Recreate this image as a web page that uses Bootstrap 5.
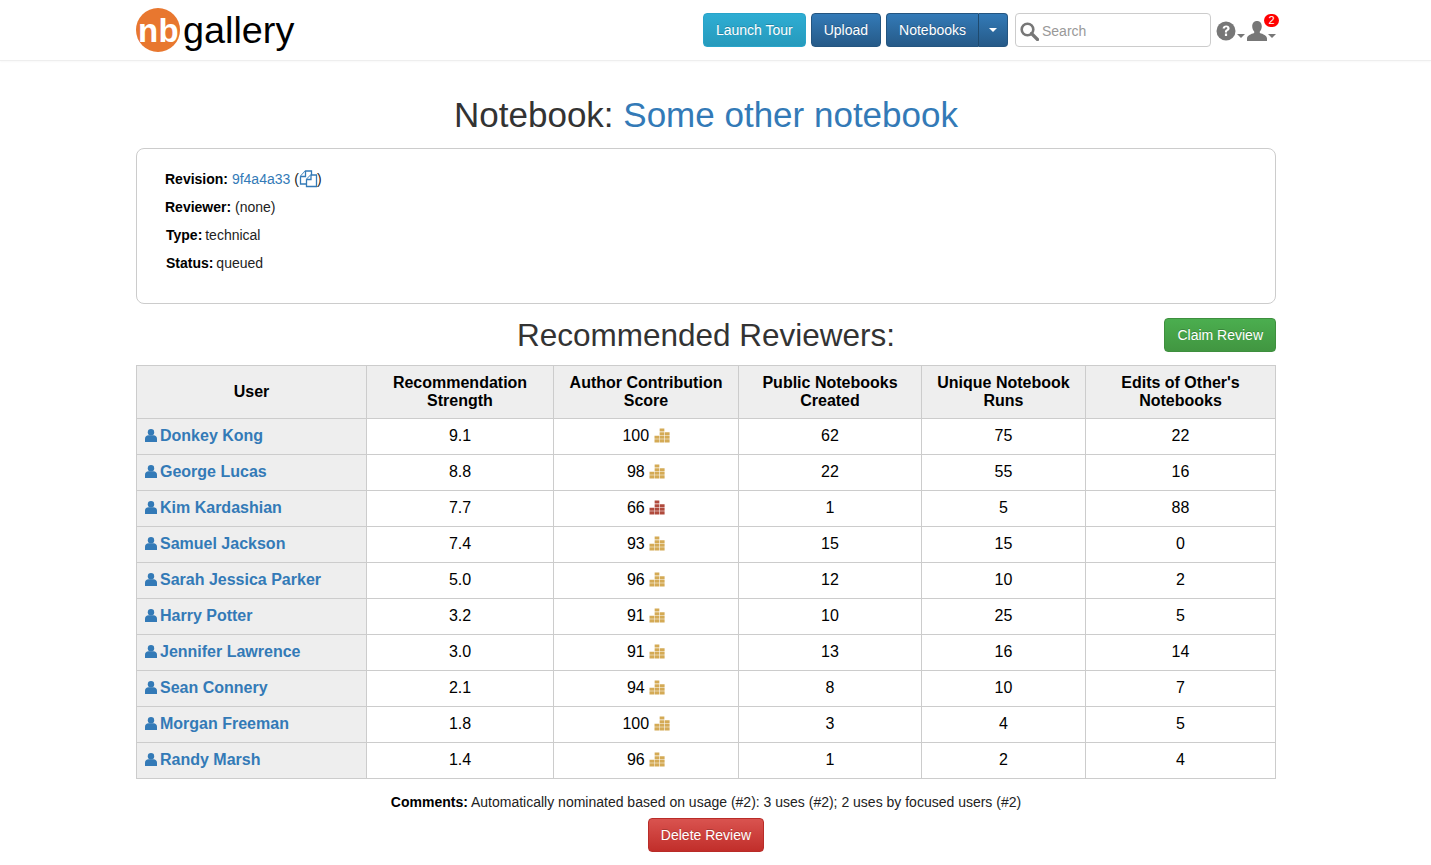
<!DOCTYPE html>
<html lang="en">
<head>
<meta charset="utf-8">
<title>nbgallery</title>
<link href="https://cdn.jsdelivr.net/npm/bootstrap@5.3.0/dist/css/bootstrap.min.css" rel="stylesheet">
<style>
body{font-family:"Liberation Sans",Arial,sans-serif;font-size:14px;line-height:20px;color:#000;background:#fff;overflow:hidden}
.wrap-w{width:1140px;margin-left:136px}
.top-bar{height:61px;border-bottom:1px solid #eee;box-shadow:0 1px 2px rgba(0,0,0,.03)}
.logo-w{height:60px;position:relative;width:170px}
.logo-c{position:absolute;left:0;top:8px;width:44px;height:44px;border-radius:50%;background:#e8772f}
.logo-nb{position:absolute;left:2px;top:9px;font-size:33px;font-weight:700;line-height:44px;color:#fff;width:50px;letter-spacing:.3px}
.logo-g{position:absolute;left:47px;top:8px;font-size:37.800px;line-height:44px;color:#000}
.bt{font-size:14px;line-height:20px;padding:6px 12px;border-radius:4px;color:#fff;border:1px solid;text-shadow:0 -1px 0 rgba(0,0,0,.2);height:34px}
.bt:hover,.bt:active{color:#fff}
.bt-gap{margin-right:5px}
.bt-info{background:linear-gradient(#2eadd3,#269abc);border-color:#28a4c9}
.bt-pri{background:linear-gradient(#337ab7,#265a88);border-color:#245580}
.bt-suc{background:linear-gradient(#4bae4f,#419641);border-color:#3e8f3e}
.bt-dan{background:linear-gradient(#d9534f,#c12e2a);border-color:#b92c28}
.caret-w{width:0;height:0;border-left:4px solid transparent;border-right:4px solid transparent;border-top:4px solid currentColor;display:inline-block}
.split-l{border-radius:4px 0 0 4px;border-right:1px solid #1e4a6e;padding:6px 12px}
.split-r{border-radius:0 4px 4px 0;border-left:0;width:29px;padding:0;display:flex;align-items:center;justify-content:center}
.search-w{width:196px;height:34px;border:1px solid #ccc;border-radius:4px;padding:2px 4px 0;color:#999;margin-left:7px}
.search-in{border:0;outline:0;padding:0;width:160px;font-size:14px;color:#555;background:transparent;margin-left:3px}
.search-in::placeholder{color:#999;opacity:1}
.ic-gray{color:#777}
.ico-w{position:relative;height:34px;margin-left:5px;padding-top:2px}
.car-a{margin:10px 0 0 1px}
.car-b{margin:10px 0 0 0}
.usr-w{margin-left:1px}
.nt-badge{position:absolute;left:18px;top:-7px;width:15px;height:13px;border-radius:7px;background:#f00;color:#fff;font-size:11px;line-height:13px;text-align:center}
.pg-title{font-size:35px;line-height:40px;text-align:center;color:#333;margin:34px 0 13px;font-weight:400}
.pg-title a{color:#337ab7;text-decoration:none}
.info-box{border:1px solid #ccc;border-radius:8px;height:156px;padding:20px 28px}
.info-box p{margin:0 0 8px;line-height:20px;color:#222}
.info-box p.nudge{padding-left:1px}
.info-box p.nudge b{margin-right:-1px}
.info-box b{color:#000}
.info-box a{color:#337ab7;text-decoration:none}
.cp-ic{vertical-align:-4px;margin:0 -2px 0 -1px}
.rec-head{height:34px;margin-top:14px;margin-bottom:13px;position:relative}
.rec-title{font-size:31.500px;line-height:34px;color:#333;font-weight:400;text-align:center;margin:0;width:1140px}
.rec-btn{position:absolute;right:0;top:0}
.tb-w{width:1139px;border-collapse:collapse;table-layout:fixed;font-size:16px;color:#000}
.tb-w th,.tb-w td{border:1px solid #ccc;text-align:center;vertical-align:middle;padding:0}
.tb-w thead th{background:#eee;line-height:18px;height:53px;font-weight:700}
.tb-w tbody td{height:36px;line-height:20px;font-weight:400;padding-bottom:2px}
.tb-w .u-cell{background:#eee;text-align:left;padding-left:8px;font-weight:700}
.tb-w .u-cell a{color:#337ab7;text-decoration:none;font-weight:700}
.u-ic{color:#337ab7;vertical-align:-1px;margin-right:3px}
.bars{vertical-align:-2px}
.cmts{text-align:center;margin:13px 0 6px;line-height:20px;color:#222}
.cmts b{color:#000}
.del-w{text-align:center}
</style>
</head>
<body>
<svg width="0" height="0" class="d-none" aria-hidden="true">
  <symbol id="s-user" viewBox="0 0 12 13"><circle cx="6" cy="3.200" r="3.200" fill="currentColor"/><path fill="currentColor" d="M0 13v-3.500C0 7.600 1.600 6.300 3.500 6.300h5c1.900 0 3.500 1.300 3.500 3.200V13z"/></symbol>
  <symbol id="s-bars" viewBox="0 0 17 16"><path fill="currentColor" d="M6 .5h5v3.300H6zM6 4.400h5v3.200H6zM11.600 4.400h5v3.200h-5zM.5 8.200h5v3.200h-5zM6 8.200h5v3.200H6zM11.600 8.200h5v3.200h-5zM.5 12h5v3.500h-5zM6 12h5v3.500H6zM11.600 12h5v3.500h-5z"/></symbol>
</svg>
<header class="top-bar">
  <div class="wrap-w d-flex align-items-center justify-content-between">
    <div class="logo-w">
      <span class="logo-c"></span>
      <span class="logo-nb">nb</span>
      <span class="logo-g">gallery</span>
    </div>
    <div class="d-flex align-items-center">
      <a class="btn bt bt-info bt-gap" href="#">Launch Tour</a>
      <a class="btn bt bt-pri bt-gap" href="#">Upload</a>
      <div class="d-flex">
        <a class="btn bt bt-pri split-l" href="#">Notebooks</a>
        <a class="btn bt bt-pri split-r" href="#"><span class="caret-w"></span></a>
      </div>
      <div class="search-w d-flex align-items-center">
        <svg width="19" height="19" viewBox="0 0 19 19" fill="none" stroke="#777" stroke-width="2.600"><circle cx="7.500" cy="7.500" r="5.800"/><path d="M11.500 11.500l6 6" stroke-width="3.200" stroke-linecap="round"/></svg>
        <input class="search-in" type="text" placeholder="Search">
      </div>
      <div class="ico-w d-flex align-items-center ic-gray">
        <svg width="20" height="20" viewBox="0 0 20 20"><circle cx="10" cy="10" r="9.500" fill="#777"/><path d="M6.600 7.600c.2-2.200 1.600-3.200 3.600-3.200 2.100 0 3.400 1.100 3.400 2.800 0 1.400-.8 2-1.700 2.600-.7.500-.9.800-.9 1.600H8.900c0-1.500.4-2.100 1.400-2.800.7-.5 1-.8 1-1.300 0-.6-.4-1-1.100-1-.8 0-1.200.5-1.300 1.300zM8.900 12.600h2.200v2.300H8.900z" fill="#fff"/></svg>
        <span class="caret-w car-a"></span>
        <span class="usr-w position-relative d-inline-flex align-items-center">
          <svg width="22" height="20" viewBox="0 0 22 20" fill="#777"><path d="M11 0c3 0 4.800 2.200 4.800 5.300 0 2.100-.8 4-2 5.200v1.600c3.200 1 7.200 2.500 7.200 5.400V20H1v-2.500c0-2.900 4-4.400 7.200-5.400v-1.600C7 9.300 6.200 7.400 6.200 5.300 6.200 2.200 8 0 11 0z"/></svg>
          <span class="caret-w car-b"></span>
          <span class="nt-badge">2</span>
        </span>
      </div>
    </div>
  </div>
</header>
<main class="wrap-w">
  <h1 class="pg-title">Notebook: <a href="#">Some other notebook</a></h1>
  <section class="info-box">
    <p><b>Revision:</b> <a href="#">9f4a4a33</a> (<svg class="cp-ic" width="21" height="19" viewBox="0 0 21 19" fill="#fff" stroke="#337ab7" stroke-width="1.300" stroke-linejoin="miter"><path d="M2.500 7.500l5-5.500h6v13h-11z"/><path d="M7.500 2v5.500h-5"/><path d="M8.500 10.500l4.500-4.500h5.500v11.500h-10z"/><path d="M13 6v4.500H8.500"/></svg>)</p>
    <p><b>Reviewer:</b> (none)</p>
    <p class="nudge"><b>Type:</b> technical</p>
    <p class="nudge"><b>Status:</b> queued</p>
  </section>
  <div class="rec-head">
    <h2 class="rec-title">Recommended Reviewers:</h2>
    <a class="btn bt bt-suc rec-btn" href="#">Claim Review</a>
  </div>
  <table class="tb-w">
    <colgroup><col style="width:230px"><col style="width:187px"><col style="width:185px"><col style="width:183px"><col style="width:164px"><col style="width:190px"></colgroup>
    <thead><tr><th>User</th><th>Recommendation<br>Strength</th><th>Author Contribution<br>Score</th><th>Public Notebooks<br>Created</th><th>Unique Notebook<br>Runs</th><th>Edits of Other's<br>Notebooks</th></tr></thead>
    <tbody>
      <tr><td class="u-cell"><svg class="u-ic" width="12" height="13"><use href="#s-user"/></svg><a href="#">Donkey Kong</a></td><td>9.1</td><td>100 <svg class="bars" width="16" height="15" color="#d4aa55"><use href="#s-bars"/></svg></td><td>62</td><td>75</td><td>22</td></tr>
      <tr><td class="u-cell"><svg class="u-ic" width="12" height="13"><use href="#s-user"/></svg><a href="#">George Lucas</a></td><td>8.8</td><td>98 <svg class="bars" width="16" height="15" color="#d4aa55"><use href="#s-bars"/></svg></td><td>22</td><td>55</td><td>16</td></tr>
      <tr><td class="u-cell"><svg class="u-ic" width="12" height="13"><use href="#s-user"/></svg><a href="#">Kim Kardashian</a></td><td>7.7</td><td>66 <svg class="bars" width="16" height="15" color="#b04a3c"><use href="#s-bars"/></svg></td><td>1</td><td>5</td><td>88</td></tr>
      <tr><td class="u-cell"><svg class="u-ic" width="12" height="13"><use href="#s-user"/></svg><a href="#">Samuel Jackson</a></td><td>7.4</td><td>93 <svg class="bars" width="16" height="15" color="#d4aa55"><use href="#s-bars"/></svg></td><td>15</td><td>15</td><td>0</td></tr>
      <tr><td class="u-cell"><svg class="u-ic" width="12" height="13"><use href="#s-user"/></svg><a href="#">Sarah Jessica Parker</a></td><td>5.0</td><td>96 <svg class="bars" width="16" height="15" color="#d4aa55"><use href="#s-bars"/></svg></td><td>12</td><td>10</td><td>2</td></tr>
      <tr><td class="u-cell"><svg class="u-ic" width="12" height="13"><use href="#s-user"/></svg><a href="#">Harry Potter</a></td><td>3.2</td><td>91 <svg class="bars" width="16" height="15" color="#d4aa55"><use href="#s-bars"/></svg></td><td>10</td><td>25</td><td>5</td></tr>
      <tr><td class="u-cell"><svg class="u-ic" width="12" height="13"><use href="#s-user"/></svg><a href="#">Jennifer Lawrence</a></td><td>3.0</td><td>91 <svg class="bars" width="16" height="15" color="#d4aa55"><use href="#s-bars"/></svg></td><td>13</td><td>16</td><td>14</td></tr>
      <tr><td class="u-cell"><svg class="u-ic" width="12" height="13"><use href="#s-user"/></svg><a href="#">Sean Connery</a></td><td>2.1</td><td>94 <svg class="bars" width="16" height="15" color="#d4aa55"><use href="#s-bars"/></svg></td><td>8</td><td>10</td><td>7</td></tr>
      <tr><td class="u-cell"><svg class="u-ic" width="12" height="13"><use href="#s-user"/></svg><a href="#">Morgan Freeman</a></td><td>1.8</td><td>100 <svg class="bars" width="16" height="15" color="#d4aa55"><use href="#s-bars"/></svg></td><td>3</td><td>4</td><td>5</td></tr>
      <tr><td class="u-cell"><svg class="u-ic" width="12" height="13"><use href="#s-user"/></svg><a href="#">Randy Marsh</a></td><td>1.4</td><td>96 <svg class="bars" width="16" height="15" color="#d4aa55"><use href="#s-bars"/></svg></td><td>1</td><td>2</td><td>4</td></tr>
    </tbody>
  </table>
  <p class="cmts"><b>Comments:</b> Automatically nominated based on usage (#2): 3 uses (#2); 2 uses by focused users (#2)</p>
  <div class="del-w"><a class="btn bt bt-dan" href="#">Delete Review</a></div>
</main>
<script src="https://cdn.jsdelivr.net/npm/bootstrap@5.3.0/dist/js/bootstrap.bundle.min.js"></script>
</body>
</html>
